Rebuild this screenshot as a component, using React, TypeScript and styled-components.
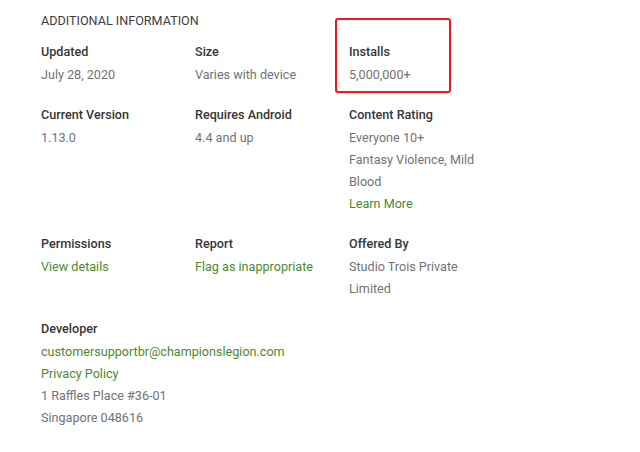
import React from 'react';
import styled, { createGlobalStyle } from 'styled-components';

const GlobalStyle = createGlobalStyle`
    body {
        margin: 0;
        background: #fff;
        font-family: Roboto, 'Liberation Sans', Arial, sans-serif;
    }
`;

interface IInfoItem {
    label: string;
    values: { text: string; link?: boolean }[];
    highlight?: boolean;
    wide?: boolean;
}

const items: IInfoItem[] = [
    { label: 'Updated', values: [{ text: 'July 28, 2020' }] },
    { label: 'Size', values: [{ text: 'Varies with device' }] },
    { label: 'Installs', values: [{ text: '5,000,000+' }], highlight: true },
    { label: 'Current Version', values: [{ text: '1.13.0' }] },
    { label: 'Requires Android', values: [{ text: '4.4 and up' }] },
    {
        label: 'Content Rating',
        values: [
            { text: 'Everyone 10+' },
            { text: 'Fantasy Violence, Mild Blood' },
            { text: 'Learn More', link: true },
        ],
    },
    { label: 'Permissions', values: [{ text: 'View details', link: true }] },
    { label: 'Report', values: [{ text: 'Flag as inappropriate', link: true }] },
    { label: 'Offered By', values: [{ text: 'Studio Trois Private Limited' }] },
    {
        label: 'Developer',
        wide: true,
        values: [
            { text: 'customersupportbr@championslegion.com', link: true },
            { text: 'Privacy Policy', link: true },
            { text: '1 Raffles Place #36-01' },
            { text: 'Singapore 048616' },
        ],
    },
];

const App: React.FC = () => {
    return (
        <>
            <GlobalStyle />
            <Section>
                <Heading>Additional Information</Heading>
                <InfoGrid>
                    {items.map((item) => (
                        <Cell key={item.label} $wide={item.wide}>
                            {item.highlight && <Highlight />}
                            <Label>{item.label}</Label>
                            {item.values.map((v) => (
                                <Value key={v.text} $link={v.link}>
                                    {v.text}
                                </Value>
                            ))}
                        </Cell>
                    ))}
                </InfoGrid>
            </Section>
        </>
    );
};

const Section = styled.div`
    padding: 11px 0 0 41px;
`;

const Heading = styled.h2`
    margin: 0 0 9px;
    font-size: 12.6px;
    font-weight: 400;
    line-height: 20px;
    text-transform: uppercase;
    color: #3c3c3c;
`;

const InfoGrid = styled.div`
    display: grid;
    grid-template-columns: repeat(3, 154px);
    row-gap: 17px;
`;

const Cell = styled.div<{ $wide?: boolean }>`
    position: relative;
    grid-column: ${(p) => (p.$wide ? '1 / -1' : 'auto')};
    padding-right: 28px;
`;

const Highlight = styled.div`
    position: absolute;
    top: -22px;
    left: -14px;
    width: 116px;
    height: 75px;
    box-sizing: border-box;
    border: 2px solid #f51616;
    border-radius: 3px;
`;

const Label = styled.div`
    font-size: 12.6px;
    font-weight: 500;
    line-height: 24px;
    color: #363636;
`;

const Value = styled.div<{ $link?: boolean }>`
    font-size: 12.6px;
    line-height: 22px;
    color: ${(p) => (p.$link ? '#4a8a30' : '#737373')};
    cursor: ${(p) => (p.$link ? 'pointer' : 'default')};
`;

export default App;
